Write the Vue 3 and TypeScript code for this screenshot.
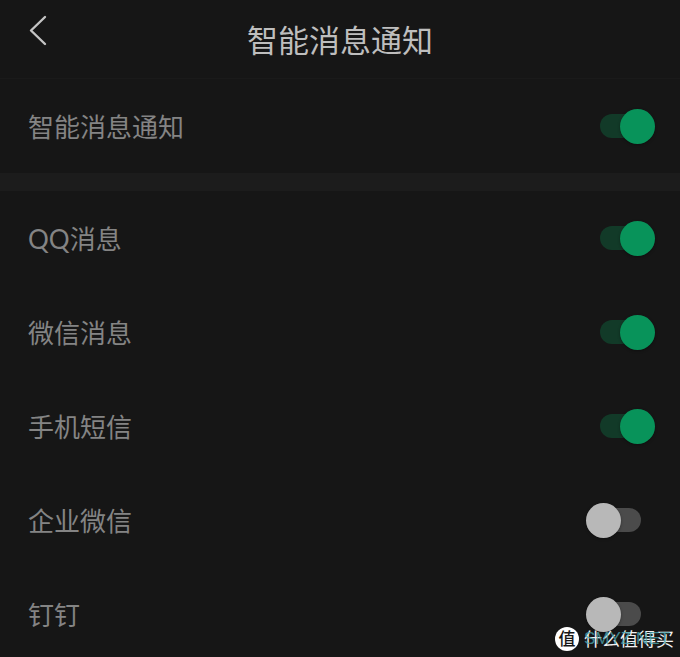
<script setup lang="ts">
import { ref } from 'vue'

interface Setting {
  id: string
  label: string
  enabled: boolean
}

const master = ref<boolean>(true)

const apps = ref<Setting[]>([
  { id: 'qq', label: 'QQ消息', enabled: true },
  { id: 'wechat', label: '微信消息', enabled: true },
  { id: 'sms', label: '手机短信', enabled: true },
  { id: 'wecom', label: '企业微信', enabled: false },
  { id: 'dingtalk', label: '钉钉', enabled: false },
])
</script>

<template>
  <main class="page">
    <header class="header">
      <button class="back" type="button" aria-label="返回">
        <svg width="20" height="32" viewBox="0 0 20 32" fill="none" aria-hidden="true">
          <path d="M17 3 L3 16.500 L17 30" stroke="currentColor" stroke-width="2.4" stroke-linecap="round" stroke-linejoin="round" />
        </svg>
      </button>
      <h1 class="title">智能消息通知</h1>
    </header>

    <section class="group">
      <div class="row">
        <label class="label" for="master">智能消息通知</label>
        <input id="master" v-model="master" class="switch" type="checkbox" role="switch" />
      </div>
    </section>

    <section class="group apps">
      <div v-for="app in apps" :key="app.id" class="row">
        <label class="label" :for="app.id">{{ app.label }}</label>
        <input :id="app.id" v-model="app.enabled" class="switch" type="checkbox" role="switch" />
      </div>
    </section>

    <div class="watermark">
      <span class="seal">值</span>
      <span class="marks">
        <span class="brand">什么值得买</span>
        <span class="site">SMYZ.NET</span>
      </span>
    </div>
  </main>
</template>

<style>
body {
  margin: 0;
  background: #161616;
}
</style>

<style scoped>
.page {
  position: relative;
  height: 100vh;
  overflow: hidden;
  background: #161616;
  font-family: Lato, "Noto Sans CJK SC", sans-serif;
  font-weight: 400;
}

.header {
  display: grid;
  grid-template-columns: 56px 1fr 56px;
  height: 78px;
  border-bottom: 1px solid #1a1a1a;
}

.back {
  display: flex;
  justify-content: flex-end;
  align-items: flex-start;
  padding: 14px 8px 0 0;
  border: 0;
  background: none;
  color: #c4c4c4;
  cursor: pointer;
}

.title {
  margin: 0;
  color: #bebebe;
  font-size: 31px;
  font-weight: 400;
  line-height: 80px;
  text-align: center;
}

.row {
  display: flex;
  align-items: center;
  justify-content: space-between;
  height: 94px;
  padding: 0 25px 0 28px;
}

.apps {
  border-top: 18px solid #1c1c1c;
}

.label {
  padding-top: 2px;
  color: #848484;
  font-size: 26px;
  line-height: 40px;
}

.switch {
  display: grid;
  align-items: center;
  width: 69px;
  height: 36px;
  margin: 0;
  appearance: none;
  cursor: pointer;
}

.switch::before,
.switch::after {
  content: "";
  grid-area: 1 / 1;
}

.switch::before {
  height: 24px;
  margin: 0 14px;
  border-radius: 12px;
  background: #4b4b4b;
}

.switch::after {
  width: 35px;
  height: 35px;
  border-radius: 50%;
  background: #b8b8b8;
  box-shadow: 0 1px 3px rgba(0, 0, 0, 0.35);
}

.switch:checked::before {
  background: #123a28;
}

.switch:checked::after {
  justify-self: end;
  background: #08935a;
}

.watermark {
  position: absolute;
  right: 6px;
  bottom: 6px;
  display: flex;
  align-items: center;
  gap: 5px;
  pointer-events: none;
}

.seal {
  width: 24px;
  height: 24px;
  border-radius: 50%;
  background: #ffffff;
  color: #161616;
  font-size: 17px;
  font-weight: 500;
  line-height: 23px;
  text-align: center;
}

.marks {
  display: grid;
  font-size: 18px;
  line-height: 24px;
}

.brand,
.site {
  grid-area: 1 / 1;
}

.brand {
  color: #f2f2f2;
}

.site {
  color: #4ba3ad;
  font-family: "Liberation Sans", sans-serif;
  font-size: 17px;
  opacity: 0.8;
}
</style>
